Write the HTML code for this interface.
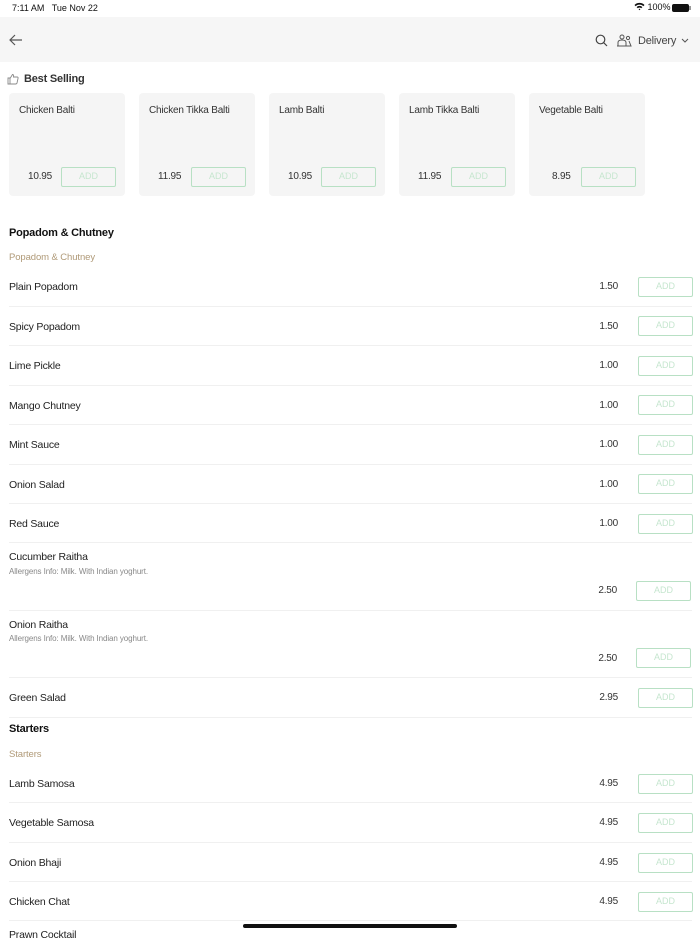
<!DOCTYPE html>
<html><head><meta charset="utf-8"><style>
*{margin:0;padding:0;box-sizing:border-box}
body{width:700px;height:934px;overflow:hidden;background:#fff;font-family:"Liberation Sans",sans-serif;color:#222;position:relative}
.a{position:absolute;white-space:nowrap}
.btn{position:absolute;width:55px;height:20px;border:1.5px solid #b8e0c4;border-radius:2px;color:#c6e6cf;font-size:9px;text-align:center;line-height:17px}
.nm{position:absolute;left:9px;font-size:10.5px;letter-spacing:-0.2px;color:#222;line-height:16px}
.pr{position:absolute;right:82px;font-size:10px;letter-spacing:-0.2px;color:#333;line-height:16px}
.dv{position:absolute;left:9px;width:683px;height:1px;background:#f0f0f0}
.card{position:absolute;top:93px;width:116px;height:103px;background:#f5f5f5;border-radius:4px}
.card .t{position:absolute;left:10px;top:10px;font-size:10px;letter-spacing:-0.2px;color:#333;line-height:16px}
.card .p{position:absolute;left:19px;top:76px;font-size:10px;letter-spacing:-0.2px;color:#333;line-height:16px}
.card .btn{left:52px;top:74px}
.h{position:absolute;left:9px;font-size:11px;letter-spacing:-0.2px;font-weight:bold;color:#111;line-height:16px}
.sub{position:absolute;left:9px;font-size:9.5px;letter-spacing:-0.1px;color:#b09a78;line-height:15px}
.al{position:absolute;left:9px;font-size:8px;letter-spacing:-0.1px;color:#888;line-height:12px}
</style></head><body>
<div class="a" style="left:12px;top:3px;font-size:9px;color:#111">7:11 AM&nbsp;&nbsp; Tue Nov 22</div>
<div class="a" style="left:634px;top:2px;font-size:9px;color:#111">
<svg width="11" height="9" viewBox="0 0 11 9" style="vertical-align:-1px"><path d="M0.5 3A7 7 0 0 1 10.5 3L9.3 4.2A5.3 5.3 0 0 0 1.7 4.2ZM2.6 5.1A4 4 0 0 1 8.4 5.1L7.2 6.3A2.3 2.3 0 0 0 3.8 6.3ZM4.6 7.2A1.3 1.3 0 0 1 6.4 7.2L5.5 8.2Z" fill="#111"/></svg> 100%</div>
<div class="a" style="left:672px;top:4px;width:17px;height:8px;background:#111;border-radius:2px"></div>
<div class="a" style="left:689px;top:6px;width:1.5px;height:4px;background:#999"></div>
<div class="a" style="left:0;top:17px;width:700px;height:45px;background:#f6f6f6"></div>
<svg class="a" style="left:9px;top:34px" width="14" height="12" viewBox="0 0 14 12"><path d="M13 6H1M6 1L1 6L6 11" stroke="#555" stroke-width="1.2" fill="none"/></svg>
<svg class="a" style="left:595px;top:34px" width="13" height="13" viewBox="0 0 13 13"><circle cx="5.5" cy="5.5" r="4.3" stroke="#444" stroke-width="1.2" fill="none"/><path d="M8.6 8.6L12 12" stroke="#444" stroke-width="1.2"/></svg>
<svg class="a" style="left:616px;top:34px" width="16" height="14" viewBox="0 0 16 14"><circle cx="6" cy="3" r="2" stroke="#555" fill="none"/><path d="M2 12V8.5Q2 6 6 6Q10 6 10 8.5V12M1 12H11" stroke="#555" fill="none"/><circle cx="12" cy="4" r="1.6" stroke="#555" fill="none"/><path d="M10 12H15L13 7" stroke="#555" fill="none"/></svg>
<div class="a" style="left:638px;top:33px;font-size:11px;letter-spacing:-0.2px;color:#444;line-height:16px">Delivery</div>
<svg class="a" style="left:681px;top:38px" width="8" height="5" viewBox="0 0 8 5"><path d="M1 1L4 4L7 1" stroke="#555" fill="none"/></svg>
<svg class="a" style="left:7px;top:73px" width="12" height="12" viewBox="0 0 12 12"><path d="M1 5H3V11H1ZM3 5.5L5.5 1.5Q7 1.5 6.5 4H10Q11.5 4 11 5.5L10 10Q9.7 11 8.5 11H3" stroke="#888" stroke-width="0.9" fill="none"/></svg>
<div class="a" style="left:24px;top:71px;font-size:11px;letter-spacing:-0.2px;font-weight:bold;color:#333;line-height:16px">Best Selling</div>
<div class="card" style="left:9px"><div class="t">Chicken Balti</div><div class="p">10.95</div><div class="btn">ADD</div></div>
<div class="card" style="left:139px"><div class="t">Chicken Tikka Balti</div><div class="p">11.95</div><div class="btn">ADD</div></div>
<div class="card" style="left:269px"><div class="t">Lamb Balti</div><div class="p">10.95</div><div class="btn">ADD</div></div>
<div class="card" style="left:399px"><div class="t">Lamb Tikka Balti</div><div class="p">11.95</div><div class="btn">ADD</div></div>
<div class="card" style="left:529px"><div class="t">Vegetable Balti</div><div class="p" style="left:23px">8.95</div><div class="btn">ADD</div></div>

<div class="h" style="top:225px">Popadom &amp; Chutney</div>
<div class="sub" style="top:250px">Popadom &amp; Chutney</div>

<div class="nm" style="top:279px">Plain Popadom</div><div class="pr" style="top:279px">1.50</div><div class="btn" style="left:638px;top:277px">ADD</div><div class="dv" style="top:306px"></div>
<div class="nm" style="top:319px">Spicy Popadom</div><div class="pr" style="top:319px">1.50</div><div class="btn" style="left:638px;top:316px">ADD</div><div class="dv" style="top:345px"></div>
<div class="nm" style="top:358px">Lime Pickle</div><div class="pr" style="top:358px">1.00</div><div class="btn" style="left:638px;top:356px">ADD</div><div class="dv" style="top:385px"></div>
<div class="nm" style="top:398px">Mango Chutney</div><div class="pr" style="top:398px">1.00</div><div class="btn" style="left:638px;top:395px">ADD</div><div class="dv" style="top:424px"></div>
<div class="nm" style="top:437px">Mint Sauce</div><div class="pr" style="top:437px">1.00</div><div class="btn" style="left:638px;top:435px">ADD</div><div class="dv" style="top:464px"></div>
<div class="nm" style="top:477px">Onion Salad</div><div class="pr" style="top:477px">1.00</div><div class="btn" style="left:638px;top:474px">ADD</div><div class="dv" style="top:503px"></div>
<div class="nm" style="top:516px">Red Sauce</div><div class="pr" style="top:516px">1.00</div><div class="btn" style="left:638px;top:514px">ADD</div><div class="dv" style="top:542px"></div>

<div class="nm" style="top:549px">Cucumber Raitha</div><div class="al" style="top:566px">Allergens Info: Milk. With Indian yoghurt.</div>
<div class="pr" style="top:583px;right:83px">2.50</div><div class="btn" style="left:636px;top:581px">ADD</div><div class="dv" style="top:610px"></div>
<div class="nm" style="top:617px">Onion Raitha</div><div class="al" style="top:633px">Allergens Info: Milk. With Indian yoghurt.</div>
<div class="pr" style="top:651px;right:83px">2.50</div><div class="btn" style="left:636px;top:648px">ADD</div><div class="dv" style="top:677px"></div>
<div class="nm" style="top:690px">Green Salad</div><div class="pr" style="top:690px">2.95</div><div class="btn" style="left:638px;top:688px">ADD</div><div class="dv" style="top:717px"></div>

<div class="h" style="top:721px">Starters</div>
<div class="sub" style="top:747px">Starters</div>
<div class="nm" style="top:776px">Lamb Samosa</div><div class="pr" style="top:776px">4.95</div><div class="btn" style="left:638px;top:774px">ADD</div><div class="dv" style="top:802px"></div>
<div class="nm" style="top:815px">Vegetable Samosa</div><div class="pr" style="top:815px">4.95</div><div class="btn" style="left:638px;top:813px">ADD</div><div class="dv" style="top:842px"></div>
<div class="nm" style="top:855px">Onion Bhaji</div><div class="pr" style="top:855px">4.95</div><div class="btn" style="left:638px;top:853px">ADD</div><div class="dv" style="top:881px"></div>
<div class="nm" style="top:894px">Chicken Chat</div><div class="pr" style="top:894px">4.95</div><div class="btn" style="left:638px;top:892px">ADD</div><div class="dv" style="top:920px"></div>
<div class="nm" style="top:927px">Prawn Cocktail</div>
<div class="a" style="left:243px;top:924px;width:214px;height:4px;border-radius:2px;background:#111"></div>
</body></html>
